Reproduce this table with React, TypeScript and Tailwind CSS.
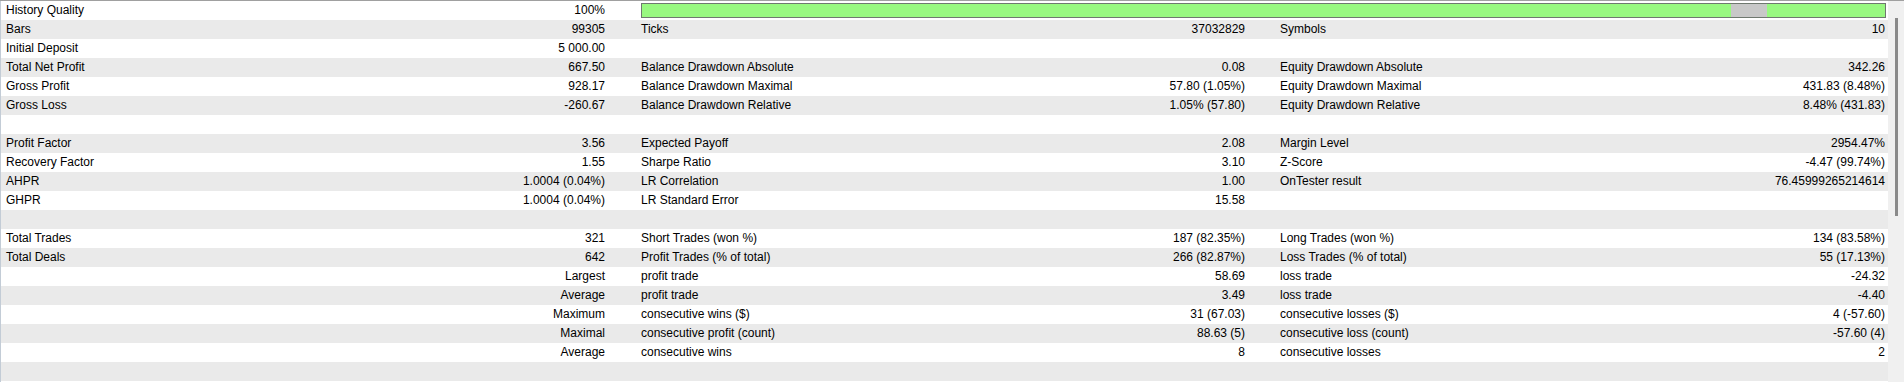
import React from 'react';

type Row = [string, string, string, string, string, string];

const rows: Row[] = [
  ['History Quality', '100%', '', '', '', ''],
  ['Bars', '99305', 'Ticks', '37032829', 'Symbols', '10'],
  ['Initial Deposit', '5 000.00', '', '', '', ''],
  ['Total Net Profit', '667.50', 'Balance Drawdown Absolute', '0.08', 'Equity Drawdown Absolute', '342.26'],
  ['Gross Profit', '928.17', 'Balance Drawdown Maximal', '57.80 (1.05%)', 'Equity Drawdown Maximal', '431.83 (8.48%)'],
  ['Gross Loss', '-260.67', 'Balance Drawdown Relative', '1.05% (57.80)', 'Equity Drawdown Relative', '8.48% (431.83)'],
  ['', '', '', '', '', ''],
  ['Profit Factor', '3.56', 'Expected Payoff', '2.08', 'Margin Level', '2954.47%'],
  ['Recovery Factor', '1.55', 'Sharpe Ratio', '3.10', 'Z-Score', '-4.47 (99.74%)'],
  ['AHPR', '1.0004 (0.04%)', 'LR Correlation', '1.00', 'OnTester result', '76.45999265214614'],
  ['GHPR', '1.0004 (0.04%)', 'LR Standard Error', '15.58', '', ''],
  ['', '', '', '', '', ''],
  ['Total Trades', '321', 'Short Trades (won %)', '187 (82.35%)', 'Long Trades (won %)', '134 (83.58%)'],
  ['Total Deals', '642', 'Profit Trades (% of total)', '266 (82.87%)', 'Loss Trades (% of total)', '55 (17.13%)'],
  ['', 'Largest', 'profit trade', '58.69', 'loss trade', '-24.32'],
  ['', 'Average', 'profit trade', '3.49', 'loss trade', '-4.40'],
  ['', 'Maximum', 'consecutive wins ($)', '31 (67.03)', 'consecutive losses ($)', '4 (-57.60)'],
  ['', 'Maximal', 'consecutive profit (count)', '88.63 (5)', 'consecutive loss (count)', '-57.60 (4)'],
  ['', 'Average', 'consecutive wins', '8', 'consecutive losses', '2'],
  ['', '', '', '', '', ''],
];

function QualityBar() {
  return (
    <div className="w-[1245px] h-[15px] mt-[2px] border border-[#6f786f] bg-[#98f880] flex">
      <div className="w-[1089px]" />
      <div className="w-[36px] bg-[#c8c8c8]" />
    </div>
  );
}

export default function App() {
  return (
    <div
      className="w-[1904px] h-[382px] overflow-hidden bg-white border-t border-[#a0a0a0] flex text-[12px] text-black"
      style={{ fontFamily: '"Liberation Sans", Arial, sans-serif' }}
    >
      <div className="w-[1888px] border-l border-[#c3ccd6] flex flex-col">
        {rows.map((r, i) => (
          <div
            key={i}
            className={`h-[19px] leading-[19px] flex whitespace-nowrap ${i % 2 === 1 ? 'bg-[#eaeaea]' : 'bg-white'}`}
          >
            <div className="w-[300px] pl-[5px]">{r[0]}</div>
            <div className="w-[304px] text-right">{r[1]}</div>
            <div className="w-[36px]" />
            {i === 0 ? (
              <QualityBar />
            ) : (
              <>
                <div className="w-[300px]">{r[2]}</div>
                <div className="w-[304px] text-right">{r[3]}</div>
                <div className="w-[35px]" />
                <div className="w-[300px]">{r[4]}</div>
                <div className="w-[305px] text-right">{r[5]}</div>
              </>
            )}
          </div>
        ))}
      </div>
      <div className="flex-1 bg-[#f0f0f0] flex justify-center pt-[17px]">
        <div className="w-[3px] h-[198px] bg-[#8a8a8a] ml-[1px]" />
      </div>
    </div>
  );
}
